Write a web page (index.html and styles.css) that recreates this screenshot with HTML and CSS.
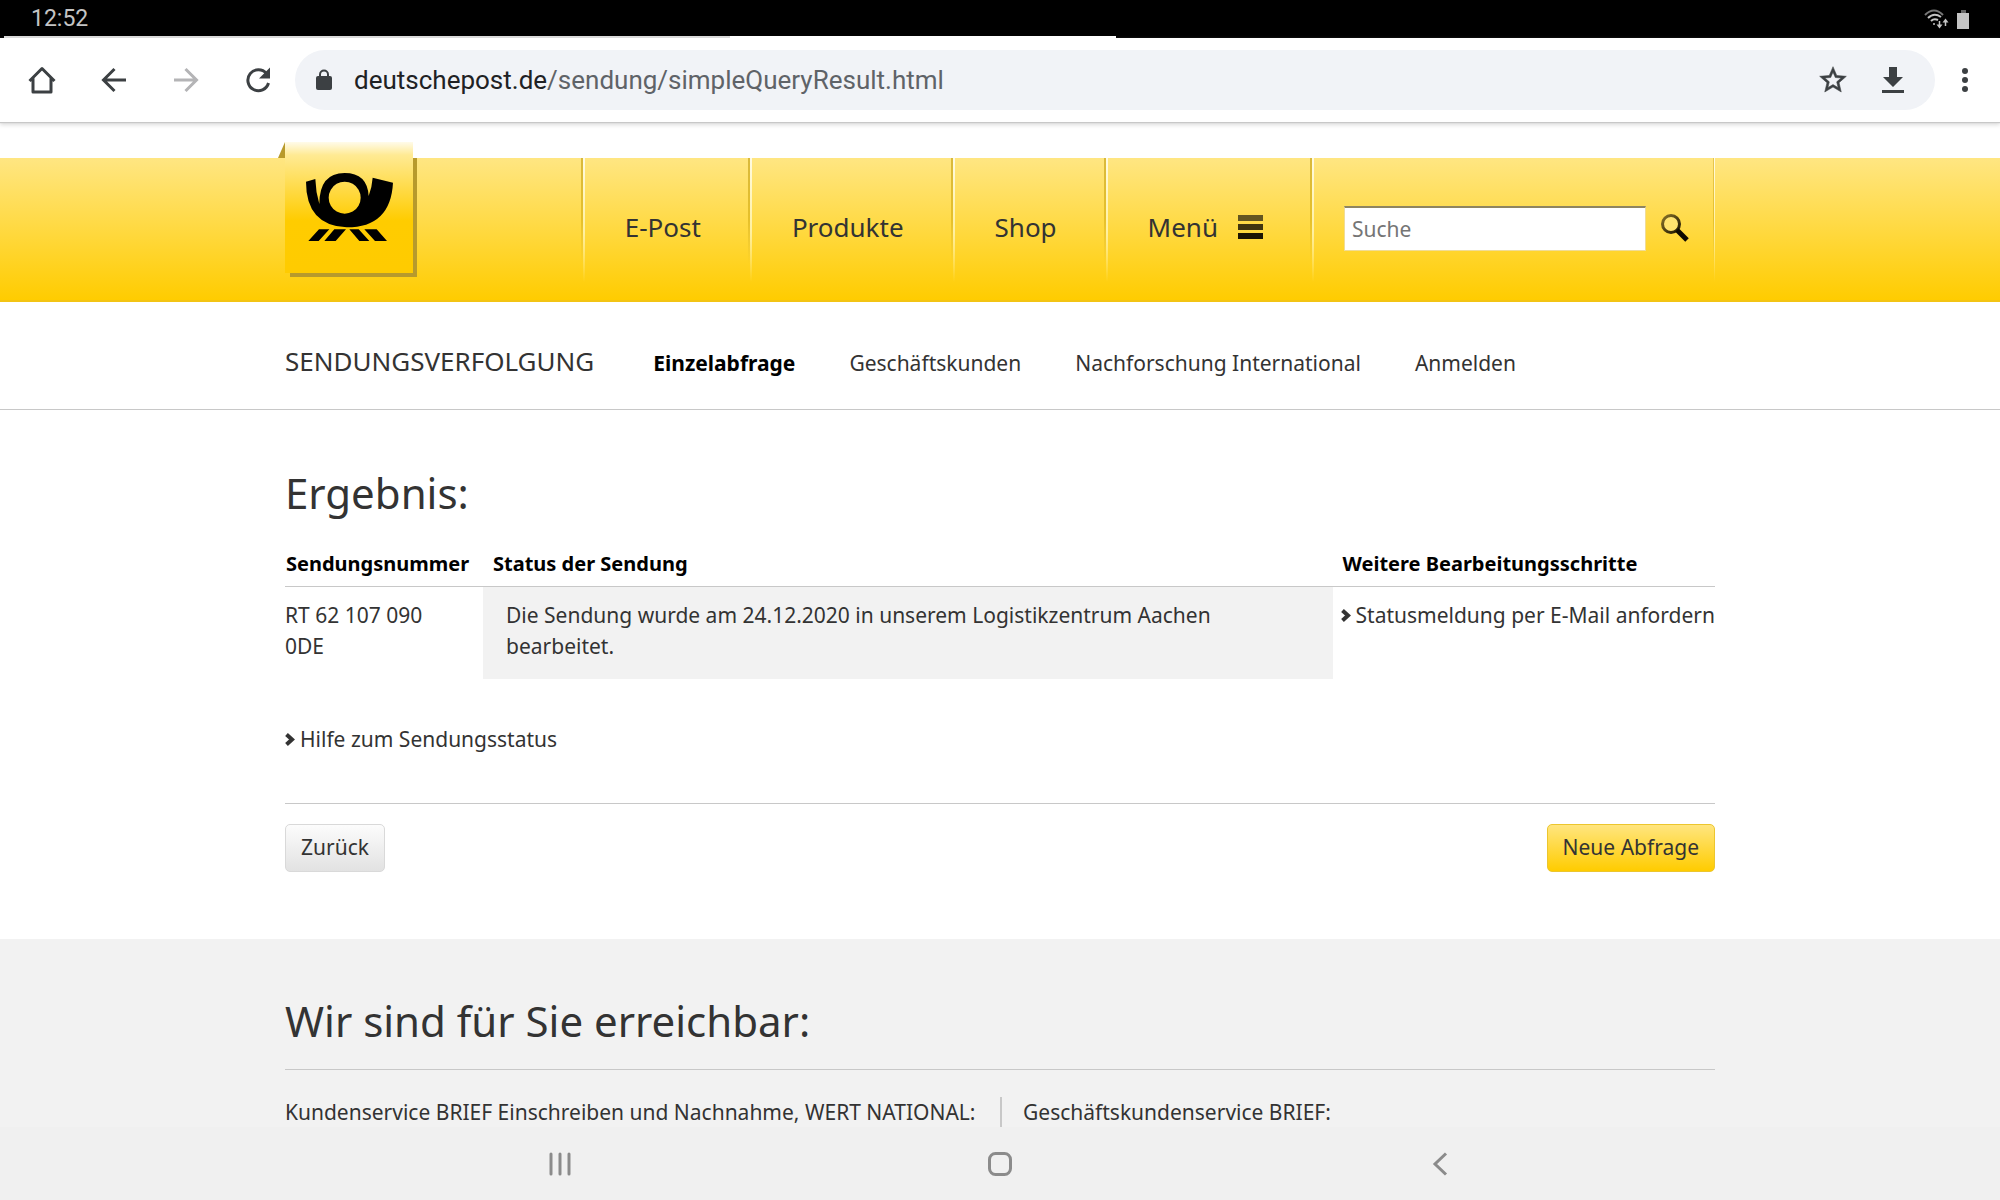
FILE: index.html
```html
<!DOCTYPE html>
<html lang="de">
<head>
<meta charset="utf-8">
<meta name="viewport" content="width=device-width, initial-scale=1">
<title>Sendungsverfolgung – Deutsche Post</title>
<link rel="stylesheet" href="styles.css">
</head>
<body>
<div class="device">
  <div class="statusbar">
    <span>12:52</span>
    <span class="status-icons">
      <svg width="28" height="22" viewBox="0 0 28 22" fill="none" stroke="#c4c4c4" stroke-width="2">
        <path d="M2 7Q11 -2 20 7" stroke="#777"/><path d="M5 10Q11 4 18 9"/><path d="M8 13Q11 10 15 12"/>
        <circle cx="11" cy="16" r="1" fill="#c4c4c4" stroke="none"/>
        <path d="M16.500 13v5M22.500 13v5" stroke-width="1.500"/>
        <path d="M13.500 16.500h6l-3 4zM19.500 14.500h6l-3-4z" fill="#c4c4c4" stroke="none"/>
      </svg>
      <svg width="12" height="19" viewBox="0 0 12 19"><path fill="#666" d="M4 0h5v3H4z"/><path fill="#c4c4c4" d="M0 3h12v16H0z"/></svg>
    </span>
  </div>
  <div class="tabstrip"><span class="tab tab-back"></span><span class="tab tab-front"></span></div>

  <div class="toolbar">
    <div class="tool-buttons">
      <button class="tool" aria-label="Startseite"><svg width="28" height="28" viewBox="0 0 28 28" fill="none" stroke="#3c4043" stroke-width="3" stroke-linejoin="round"><path d="M1.500 15 14 2.500 26.500 15M5 12v14h18V12"/></svg></button>
      <button class="tool" aria-label="Zurück"><svg width="28" height="28" viewBox="0 0 28 28" fill="none" stroke="#3c4043" stroke-width="3"><path d="M26 14H4M14.500 3 3.500 14l11 11"/></svg></button>
      <button class="tool" aria-label="Vorwärts" disabled><svg width="28" height="28" viewBox="0 0 28 28" fill="none" stroke="#b4b4b6" stroke-width="3"><path d="M2 14h22M13.500 3l11 11-11 11"/></svg></button>
      <button class="tool" aria-label="Neu laden"><svg width="28" height="28" viewBox="0 0 28 28"><path d="M22.500 7.500A10.500 10.500 0 1 0 24.500 17" fill="none" stroke="#3c4043" stroke-width="3"/><path d="M26 1.500v11H15z" fill="#3c4043"/></svg></button>
    </div>
    <div class="omnibox">
      <svg width="16" height="22" viewBox="0 0 16 22"><path d="M4 9V5.500a4 4 0 0 1 8 0V9" fill="none" stroke="#3c4043" stroke-width="2"/><rect y="7" width="16" height="14" rx="2" fill="#3c4043"/></svg>
      <span class="url"><span class="host">deutschepost.de</span>/sendung/simpleQueryResult.html</span>
      <button class="tool-sm" aria-label="Lesezeichen"><svg width="32" height="32" viewBox="0 0 24 24"><path fill="#3c4043" d="M22 9.240l-7.190-.62L12 2 9.190 8.630 2 9.240l5.460 4.730L5.820 21 12 17.270 18.180 21l-1.630-7.030L22 9.240zM12 15.400l-3.760 2.270 1-4.280-3.320-2.880 4.380-.38L12 6.100l1.710 4.040 4.380.38-3.320 2.880 1 4.280L12 15.400z" stroke="#3c4043" stroke-width=".4"/></svg></button>
      <button class="tool-sm" aria-label="Herunterladen"><svg width="22" height="26" viewBox="0 0 22 26"><path fill="#3c4043" d="M7 0h8v10h6L11 20 1 10h6zM0 23h22v3H0z"/></svg></button>
    </div>
    <button class="tool-sm" aria-label="Weitere Optionen"><svg width="8" height="26" viewBox="0 0 8 26" fill="#3c4043"><circle cx="4" cy="4" r="3"/><circle cx="4" cy="13" r="3"/><circle cx="4" cy="22" r="3"/></svg></button>
  </div>

  <div class="page">
    <header class="site-header">
      <div class="wrap header-row">
        <a class="logo" href="#" aria-label="Deutsche Post">
          <svg width="139" height="135" viewBox="0 0 139 135">
            <defs><linearGradient id="sheet" x1="0" y1="0" x2="0" y2="1"><stop offset="0" stop-color="#fffbea"/><stop offset=".1" stop-color="#ffea93"/><stop offset=".6" stop-color="#fc0"/><stop offset="1" stop-color="#ffcb00"/></linearGradient></defs>
            <path fill="#b89a2c" d="M0 16 7 0v16zM135 16h4v119H12v-5h123z"/>
            <path fill="url(#sheet)" d="M7 0h128v131H7z"/>
            <g transform="translate(-8 -12) scale(.33333)">
              <path d="M108 155 136 147Q137 185 148 222Q148 129 224 129Q292 129 296 198Q306 172 308 143L369 158Q362 292 230 292Q108 286 108 155zM224 155a48 48 0 1 0 .1 0z" fill-rule="evenodd"/>
              <path d="M147 298h31l-32 35h-31zM193 298h35l-31 35h-34zM238 298h28l32 35h-30zM283 298h37l31 35h-36z"/>
            </g>
          </svg>
        </a>
        <nav class="main-nav">
          <a href="#">E-Post</a>
          <a href="#">Produkte</a>
          <a href="#">Shop</a>
          <a href="#">Menü <svg width="25" height="24" viewBox="0 0 25 24"><path fill="#645621" d="M0 0h25v6H0z"/><path fill="#41350f" d="M0 9h25v6H0z"/><path fill="#1c1503" d="M0 18h25v6H0z"/></svg></a>
        </nav>
        <form class="search">
          <input type="text" placeholder="Suche" aria-label="Suche">
          <button type="button" aria-label="Suchen"><svg width="30" height="32" viewBox="0 0 30 32"><defs><linearGradient id="lens" x1="0" y1="0" x2="1" y2="1"><stop offset="0" stop-color="#8a7428"/><stop offset="1" stop-color="#1a1200"/></linearGradient></defs><circle cx="11" cy="12" r="8.500" fill="#ffe98a" fill-opacity=".6" stroke="url(#lens)" stroke-width="3"/><path d="M17 18 27 28" stroke="#0d0900" stroke-width="5"/></svg></button>
        </form>
      </div>
    </header>

    <div class="subnav">
      <div class="wrap subnav-row">
        <span class="section-title">SENDUNGSVERFOLGUNG</span>
        <nav>
          <a class="active" href="#">Einzelabfrage</a>
          <a href="#">Geschäftskunden</a>
          <a href="#">Nachforschung International</a>
          <a href="#">Anmelden</a>
        </nav>
      </div>
    </div>

    <main class="wrap result">
      <h1>Ergebnis:</h1>
      <table>
        <thead>
          <tr><th scope="col" class="col-number">Sendungsnummer</th><th scope="col">Status der Sendung</th><th scope="col" class="col-steps">Weitere Bearbeitungsschritte</th></tr>
        </thead>
        <tbody>
          <tr>
            <td class="number">RT 62 107 090 0DE</td>
            <td class="status">Die Sendung wurde am 24.12.2020 in unserem Logistikzentrum Aachen bearbeitet.</td>
            <td class="steps"><a class="arrow" href="#"><svg width="10" height="13" viewBox="0 0 10 13"><path d="M1.500 1.500 7 6.500l-5.500 5" fill="none" stroke="#333" stroke-width="4"/></svg>Statusmeldung per E-Mail anfordern</a></td>
          </tr>
        </tbody>
      </table>
      <a class="arrow help" href="#"><svg width="10" height="13" viewBox="0 0 10 13"><path d="M1.500 1.500 7 6.500l-5.500 5" fill="none" stroke="#333" stroke-width="4"/></svg>Hilfe zum Sendungsstatus</a>
      <div class="actions">
        <button type="button" class="btn">Zurück</button>
        <button type="button" class="btn btn-primary">Neue Abfrage</button>
      </div>
    </main>

    <section class="contact">
      <div class="wrap">
        <h2>Wir sind für Sie erreichbar:</h2>
        <div class="contact-cols">
          <div>Kundenservice BRIEF Einschreiben und Nachnahme, WERT NATIONAL:</div>
          <div>Geschäftskundenservice BRIEF:</div>
        </div>
      </div>
    </section>
  </div>

  <div class="sysnav">
    <button aria-label="Letzte Apps"><svg width="22" height="24" viewBox="0 0 22 24" fill="none" stroke="#8b8b8b" stroke-width="3" stroke-linecap="round"><path d="M2 2v20M11 2v20M20 2v20"/></svg></button>
    <button aria-label="Startbildschirm"><svg width="24" height="24" viewBox="0 0 24 24" fill="none" stroke="#8b8b8b" stroke-width="3"><rect x="1.500" y="1.500" width="21" height="21" rx="6"/></svg></button>
    <button aria-label="Zurück"><svg width="16" height="24" viewBox="0 0 16 24" fill="none" stroke="#8b8b8b" stroke-width="3"><path d="M14 1.500 3 12l11 10.500"/></svg></button>
  </div>
</div>
</body>
</html>
```
FILE: styles.css
```css
* { box-sizing: border-box; }

body {
  margin: 0;
  background: #fff;
  color: #333;
  font: 21px/31px "Noto Sans", "Open Sans", sans-serif;
}

a { color: inherit; text-decoration: none; }

button {
  padding: 0;
  border: 0;
  background: none;
  color: inherit;
  font: inherit;
}

svg { display: block; flex: none; }

.device {
  display: flex;
  flex-direction: column;
  height: 100vh;
  overflow: hidden;
}

/* Android status bar and browser chrome */
.statusbar {
  display: flex;
  flex: none;
  justify-content: space-between;
  align-items: center;
  height: 36px;
  padding: 2px 31px 0;
  background: #000;
  color: #c4c4c4;
  font: 23px/34px Roboto, sans-serif;
}

.status-icons { display: flex; align-items: center; gap: 6px; }

.tabstrip {
  display: flex;
  flex: none;
  height: 2px;
  padding-left: 4px;
  background: #000;
}

.tab-back { width: 726px; background: #dadada; }
.tab-front { width: 386px; background: #fff; }

.toolbar {
  position: relative;
  z-index: 1;
  display: flex;
  flex: none;
  align-items: center;
  height: 84px;
  padding: 0 31px 0 28px;
  background: #fff;
  box-shadow: 0 1px 1px #c8c8c8, 0 3px 4px #ddd;
}

.tool-buttons { display: flex; gap: 44px; }

.omnibox {
  display: flex;
  flex: 1;
  align-items: center;
  height: 60px;
  margin: 0 26px 0 23px;
  padding: 0 31px 0 21px;
  border-radius: 30px;
  background: #f1f3f7;
}

.url {
  flex: 1;
  margin-left: 22px;
  color: #5f6368;
  font: 26px/36px Roboto, sans-serif;
}

.host { color: #202124; }
.omnibox .tool-sm + .tool-sm { margin-left: 33px; }

/* Web page */
.page { flex: 1; overflow: hidden; min-height: 0; }
.wrap { max-width: 1430px; margin: 0 auto; }

.site-header {
  height: 144px;
  margin-top: 36px;
  border-bottom: 2px solid #f3c414;
  background: linear-gradient(#ffe682, #fc0);
}

.header-row { display: flex; align-items: flex-start; }

.logo { margin: -16px 0 0 -7px; }

.main-nav { display: flex; margin-left: auto; }

/* Each cell starts with a dark and a light hairline that fade downwards */
.main-nav a,
.search {
  display: flex;
  align-items: center;
  height: 124px;
  padding: 14px 47px 0 44px;
  background:
    linear-gradient(#d9b93c, #e6c02a 50%, transparent 85%) 0 0 / 2px 100% no-repeat,
    linear-gradient(#fffbe2, #fff0a0 60%, transparent) 2px 0 / 2px 100% no-repeat;
  font-size: 26px;
}

.main-nav a svg { margin-left: 20px; }

.search {
  padding: 16px 25px 0 34px;
  background:
    linear-gradient(#d9b93c, #e6c02a 50%, transparent 85%) 0 0 / 2px 100% no-repeat,
    linear-gradient(#fffbe2, #fff0a0 60%, transparent) 2px 0 / 2px 100% no-repeat,
    linear-gradient(#e6c650, #e6c02a 50%, transparent 85%) right 1px top 0 / 1px 100% no-repeat,
    linear-gradient(#fffbe2, #fff0a0 60%, transparent) right 0 top 0 / 1px 100% no-repeat;
}

.search input {
  width: 302px;
  height: 45px;
  padding: 0 7px;
  border: 1px solid #f0dc96;
  border-top: 2px solid #8f8560;
  background: #fff;
  color: #333;
  font: 21px/31px "Noto Sans", sans-serif;
}

.search input::placeholder { color: #757575; }
.search button { margin-left: 14px; }

.subnav { border-bottom: 1px solid #c8c8c8; }

.subnav-row {
  display: flex;
  align-items: baseline;
  height: 107px;
  padding-top: 41px;
}

.section-title { font-size: 26px; line-height: 36px; }
.subnav nav { display: flex; gap: 54px; margin-left: 59px; }
.active { color: #000; font-weight: 700; }

.result { padding: 53px 0 67px; }

h1,
h2 {
  margin: 0;
  font-size: 42px;
  font-weight: 400;
  line-height: 60px;
}

table {
  width: 100%;
  margin-top: 25px;
  border-collapse: collapse;
}

th {
  padding: 0 0 7px 10px;
  border-bottom: 1px solid #c8c8c8;
  color: #000;
  font-size: 20px;
  font-weight: 700;
  text-align: left;
}

td { padding: 13px 0 17px; vertical-align: top; }

.col-number { width: 198px; padding-left: 1px; }
.col-steps { width: 382px; }
.number { padding-right: 36px; }
.status { padding-left: 23px; padding-right: 36px; background: #f2f2f2; }
.steps { padding-left: 8px; white-space: nowrap; }

.arrow { display: flex; align-items: center; gap: 5px; }
.help { margin-top: 45px; }

.actions {
  display: flex;
  justify-content: space-between;
  margin-top: 48px;
  padding-top: 20px;
  border-top: 1px solid #c8c8c8;
}

.btn {
  height: 48px;
  padding: 0 15px 2px;
  border: 1px solid #d9d9d9;
  border-radius: 5px;
  background: linear-gradient(#fcfcfc, #e2e2e2);
}

.btn-primary {
  border-color: #ecc62e;
  background: linear-gradient(#ffe57f, #fc0);
}

.contact { background: #f2f2f2; padding: 52px 0; }

.contact-cols {
  display: grid;
  grid-template-columns: 1fr 1fr;
  margin-top: 18px;
  padding-top: 27px;
  border-top: 1px solid #c8c8c8;
}

.contact-cols div + div {
  border-left: 2px solid #c8c8c8;
  padding-left: 21px;
}

/* Android navigation bar */
.sysnav {
  display: grid;
  flex: none;
  grid-template-columns: repeat(3, 22%);
  justify-content: center;
  height: 73px;
  background: #f0f0f0;
}

.sysnav button { display: grid; place-items: center; }
```
